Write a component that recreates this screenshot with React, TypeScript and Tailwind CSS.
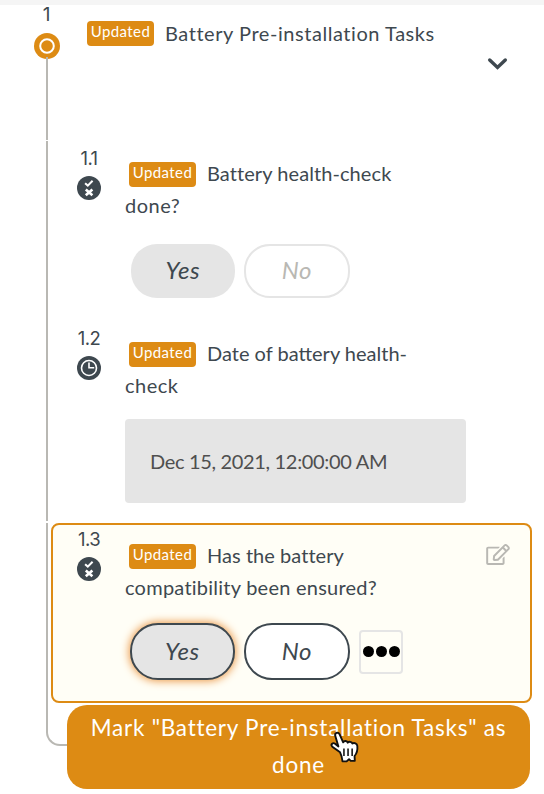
import React from "react";
import { FaRegEdit } from "react-icons/fa";

function Updated() {
  return (
    <span className="mr-[11px] inline-flex h-[25px] w-[67px] shrink-0 justify-center rounded-[4px] bg-[#dd8b14] text-[15px] leading-[21px] tracking-[0.4px] text-white">
      Updated
    </span>
  );
}

function CheckIcon() {
  return (
    <svg className="h-6 w-6" viewBox="0 0 24 24" fill="none">
      <circle cx="12" cy="12" r="12" fill="#3e484f" />
      <path d="M8.1 7.2l2.7 2.4 4.8-4.9" stroke="#fff" strokeWidth="2" />
      <path d="M8.8 13.4l6.6 5.8M15.4 13.4l-6.6 5.8" stroke="#fff" strokeWidth="2.6" />
    </svg>
  );
}

function ClockIcon() {
  return (
    <svg className="h-6 w-6" viewBox="0 0 24 24" fill="none">
      <circle cx="12" cy="12" r="12" fill="#3e484f" />
      <circle cx="12" cy="12" r="7.5" stroke="#fff" strokeWidth="1.6" />
      <path d="M12 6.5v5.3h5.2" stroke="#fff" strokeWidth="1.6" />
    </svg>
  );
}

function StepNumber({ label, children }: { label: string; children: React.ReactNode }) {
  return (
    <div className="flex w-[50px] shrink-0 flex-col items-center gap-[6px]">
      <span className="font-['Inter','Liberation_Sans',sans-serif] text-[18.5px] leading-6 tracking-[-0.6px]">{label}</span>
      {children}
    </div>
  );
}

export default function App() {
  return (
    <main className="relative h-[794px] w-[544px] overflow-hidden border-t-[5px] border-[#f5f5f5] bg-white font-['Lato','Liberation_Sans',sans-serif] text-[20px] text-[#3e484f]">
      <header className="flex h-[135px]">
        <div className="flex w-[93px] shrink-0 flex-col items-center">
          <span className="h-[28px] font-['Inter','Liberation_Sans',sans-serif] text-[19px] leading-[19px]">1</span>
          <svg className="h-[26px] w-[26px] shrink-0" viewBox="0 0 26 26" fill="none">
            <circle cx="13" cy="13" r="13" fill="#dd8b14" />
            <circle cx="13" cy="13" r="6.8" stroke="#fff" strokeWidth="2" />
          </svg>
          <div className="-mt-[2px] w-[2px] flex-1 bg-[#b9b8b3]" />
        </div>
        <h1 className="-ml-[6px] flex h-[58px] items-start pt-[16px] leading-[24px]">
          <Updated />
          <span className="whitespace-nowrap tracking-[0.55px]">Battery Pre-installation Tasks</span>
        </h1>
        <svg className="ml-auto mr-[36px] mt-[51px] h-[15px] w-[21px] shrink-0" viewBox="0 0 21 15" fill="none">
          <path d="M2.7 4l7.8 7.5 7.8-7.5" stroke="#3e484f" strokeWidth="3.4" strokeLinecap="round" />
        </svg>
      </header>

      <div className="ml-[46px] mt-px h-[380px] border-l-2 border-[#b9b8b3] pl-4">
        <section className="flex h-[180px] gap-[11px] pt-[5px]">
          <StepNumber label="1.1"><CheckIcon /></StepNumber>
          <div className="pt-[12px]">
            <p className="pl-1 leading-[30px]">
              <span className="flex h-8 items-center"><Updated /><span className="whitespace-nowrap pb-[2px] tracking-[0.08px]">Battery health-check</span></span>
              <span className="-ml-1 block h-8 tracking-[0.5px]">done?</span>
            </p>
            <div className="ml-[6px] mt-[22px] flex gap-[9px] text-[24px] italic">
              <button className="h-[54px] w-[104px] rounded-[26px] bg-[#e5e5e5] pb-[3px] tracking-[0.7px]">Yes</button>
              <button className="h-[54px] w-[106px] rounded-[26px] border-2 border-[#e5e5e5] bg-white pb-[3px] tracking-[0.7px] text-[#b9b8b3]">No</button>
            </div>
          </div>
        </section>
        <section className="flex h-[200px] gap-[11px] pt-[5px]">
          <StepNumber label="1.2"><ClockIcon /></StepNumber>
          <div className="pt-[12px]">
            <p className="pl-1 leading-[30px]">
              <span className="flex h-8 items-center"><Updated /><span className="whitespace-nowrap pb-[2px]">Date of battery health-</span></span>
              <span className="-ml-1 block h-8 tracking-[0.5px]">check</span>
            </p>
            <div className="mt-[17px] flex h-[84px] w-[341px] items-center rounded-[4px] bg-[#e5e5e5] pl-[25px] text-[#4f4f4f]">
              <span className="whitespace-nowrap tracking-[-0.33px]">Dec 15, 2021, 12:00:00 AM</span>
            </div>
          </div>
        </section>
      </div>

      <div className="ml-[46px] mt-[2px] flex items-start">
        <div className="h-[223px] w-[28px] shrink-0 rounded-bl-[14px] border-b-2 border-l-2 border-[#b9b8b3]" />
        <div className="relative -ml-[23px]">
          <section className="flex h-[180px] w-[481px] gap-[11px] rounded-[8px] border-2 border-[#dd8b14] bg-[#fffef6] pl-[11px] pt-[2px]">
            <StepNumber label="1.3"><CheckIcon /></StepNumber>
            <div className="pt-[13px]">
              <p className="pl-1 leading-[30px]">
                <span className="flex h-8 items-center"><Updated /><span className="whitespace-nowrap pb-[2px] tracking-[0.05px]">Has the battery</span></span>
                <span className="-ml-1 block h-8 whitespace-nowrap tracking-[0.24px]">compatibility been ensured?</span>
              </p>
              <div className="ml-[5px] mt-[19px] flex items-center gap-[9px] text-[24px] italic">
                <button className="h-[57px] w-[105px] rounded-[28px] border-2 border-[#3e484f] bg-[#e5e5e5] pb-px tracking-[0.7px] shadow-[0_0_9px_1px_#eb9845]">Yes</button>
                <button className="h-[57px] w-[106px] rounded-[28px] border-2 border-[#3e484f] bg-white pb-px tracking-[0.7px]">No</button>
                <button className="flex h-11 w-11 items-center justify-center gap-[2px] rounded-[4px] border-2 border-[#e5e5e5]">
                  <i className="h-[11px] w-[11px] shrink-0 rounded-full bg-black" />
                  <i className="h-[11px] w-[11px] shrink-0 rounded-full bg-black" />
                  <i className="h-[11px] w-[11px] shrink-0 rounded-full bg-black" />
                </button>
              </div>
            </div>
            <FaRegEdit className="ml-auto mr-[20px] mt-[17px] h-[21px] w-[24px] shrink-0 text-[#b9b8b3]" />
          </section>
          <button className="ml-4 mt-[2px] block h-[84px] w-[463px] rounded-[20px] bg-[#dd8b14] pb-[3px] text-[22.5px] leading-[37px] tracking-[0.75px] text-white">
            Mark "Battery Pre-installation Tasks" as<br />done
          </button>
        </div>
      </div>

      <svg className="absolute left-[329px] top-[726px] h-[33px] w-[31px]" viewBox="0 0 28 31" preserveAspectRatio="none" fill="none">
        <path d="M10 20L3 14.8C1 12.5 3.6 10.6 5.5 12l3 2.5L5.7 4.8C4.8 1.8 8.2.4 9.6 3.2l3.2 7.5c.8-2 3.7-1.6 4.1.3 1.1-1.6 3.8-.9 4.2.8 1.7-1.2 4.2-.1 4.5 2.1.4 4.2-.6 7.2-2.5 9.6l.2 4.5h-3.7l-1.5-1.5-2.2 2h-3.7c-.3-3-1-6-2.2-8.5z" fill="#fff" stroke="#111" strokeWidth="1.7" strokeLinejoin="round" />
        <path d="M13.5 16.5v7M17.2 16.5v7M20.9 16.5v7" stroke="#111" strokeWidth="1.4" />
      </svg>
    </main>
  );
}
